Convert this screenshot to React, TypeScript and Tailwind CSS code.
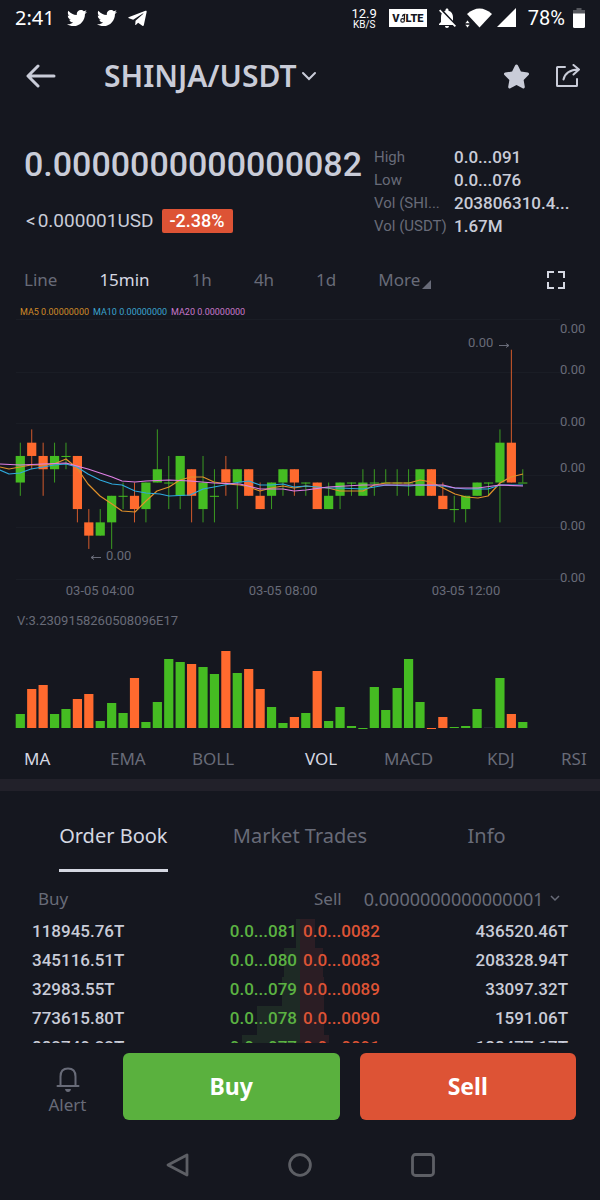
import { useState } from 'react'
import { FaStar, FaTelegramPlane, FaTwitter } from 'react-icons/fa'
import { MdNotificationsOff } from 'react-icons/md'

const GREEN = '#45bc22'
const ORANGE = '#ff6a2e'

type Candle = {
  up: boolean
  // body top, body bottom, wick top, wick bottom, counted in price ticks from the top
  ticks: [number, number, number, number]
  volume: number
  muted?: boolean
}

const candles: Candle[] = [
  { up: true, ticks: [2, 4, 1, 5], volume: 14 },
  { up: false, ticks: [1, 2, 0, 3], volume: 39 },
  { up: false, ticks: [2, 3, 1, 5], volume: 43 },
  { up: true, ticks: [2, 3, 1, 4], volume: 14 },
  { up: true, ticks: [2, 2, 1, 3], volume: 19 },
  { up: false, ticks: [2, 6, 2, 7], volume: 29 },
  { up: false, ticks: [7, 8, 6, 9], volume: 34 },
  { up: true, ticks: [7, 8, 6, 8], volume: 7 },
  { up: true, ticks: [5, 7, 5, 9], volume: 25 },
  { up: true, ticks: [5, 5, 4, 6], volume: 15 },
  { up: false, ticks: [5, 6, 4, 7], volume: 50 },
  { up: true, ticks: [4, 6, 4, 7], volume: 6 },
  { up: true, ticks: [3, 4, 0, 4], volume: 26 },
  { up: true, ticks: [4, 4, 2, 6], volume: 69 },
  { up: true, ticks: [2, 5, 2, 6], volume: 66 },
  { up: false, ticks: [3, 5, 3, 7], volume: 64 },
  { up: true, ticks: [4, 6, 2, 7], volume: 61 },
  { up: true, ticks: [5, 5, 3, 7], volume: 54 },
  { up: false, ticks: [3, 4, 2, 5], volume: 77 },
  { up: true, ticks: [3, 4, 3, 6], volume: 55 },
  { up: false, ticks: [3, 5, 3, 5], volume: 59 },
  { up: false, ticks: [5, 6, 4, 6], volume: 39 },
  { up: true, ticks: [4, 5, 4, 6], volume: 21 },
  { up: true, ticks: [3, 4, 3, 5], volume: 5 },
  { up: false, ticks: [3, 4, 3, 5], volume: 11 },
  { up: true, ticks: [4, 4, 4, 5], volume: 15 },
  { up: false, ticks: [4, 6, 4, 6], volume: 57 },
  { up: true, ticks: [5, 6, 4, 6], volume: 7 },
  { up: true, ticks: [4, 5, 4, 6], volume: 21 },
  { up: true, ticks: [4, 4, 4, 5], volume: 2 },
  { up: true, ticks: [4, 5, 3, 5], volume: 0 },
  { up: true, ticks: [4, 4, 3, 5], volume: 41 },
  { up: true, ticks: [4, 4, 3, 4], volume: 18 },
  { up: true, ticks: [4, 4, 3, 5], volume: 40 },
  { up: true, ticks: [4, 4, 3, 5], volume: 69 },
  { up: true, ticks: [3, 5, 3, 5], volume: 26 },
  { up: false, ticks: [3, 5, 3, 5], volume: 0 },
  { up: false, ticks: [5, 6, 4, 6], volume: 11 },
  { up: true, ticks: [6, 6, 5, 7], volume: 1 },
  { up: true, ticks: [5, 6, 5, 7], volume: 2 },
  { up: true, ticks: [4, 5, 4, 5], volume: 19 },
  { up: true, ticks: [4, 4, 4, 5], volume: 1, muted: true },
  { up: true, ticks: [1, 4, 0, 7], volume: 50 },
  { up: false, ticks: [1, 4, -6, 4], volume: 14 },
  { up: true, ticks: [4, 4, 3, 4], volume: 6 },
]

const averages = [
  {
    label: 'MA5 0.00000000',
    text: 'text-[#d08a28]',
    stroke: '#e0912a',
    points:
      '0,149 9,151 20,149 31,147 43,147 54,146 66,141 77,150 88,166 100,178 112,186 122,193 135,194 146,183 157,173 169,169 180,162 191,159 203,159 214,164 226,166 240,167 249,169 260,173 271,170 283,168 294,170 306,168 317,169 328,170 340,173 363,173 374,167 386,165 409,165 420,162 431,164 443,170 455,176 466,179 478,180 488,178 500,165 511,159 523,156',
  },
  {
    label: 'MA10 0.00000000',
    text: 'text-[#3aa3cf]',
    stroke: '#2fa9dc',
    points:
      '0,152 9,156 20,155 31,151 43,149 54,147 66,146 77,149 88,156 100,162 112,166 122,167 135,173 146,175 160,176 169,178 190,177 203,171 214,169 240,164 249,163 260,167 271,167 283,166 294,169 306,168 328,170 340,170 363,171 386,167 409,168 420,167 443,168 455,170 466,171 488,171 500,167 523,167',
  },
  {
    label: 'MA20 0.00000000',
    text: 'text-[#c877cb]',
    stroke: '#e07fe6',
    points:
      '0,146 20,147 43,146 66,145 77,148 88,151 100,155 112,159 122,163 135,164 146,163 169,162 190,163 214,165 240,166 260,171 283,171 294,173 306,172 328,169 363,167 386,167 443,167 455,170 478,170 500,167 523,168',
  },
]

const stats = [
  ['High', '0.0...091'],
  ['Low', '0.0...076'],
  ['Vol (SHI...', '203806310.4...'],
  ['Vol (USDT)', '1.67M'],
]

const orders = [
  { buyAmount: '118945.76T', buy: '0.0...081', buyDepth: 3, sell: '0.0...0082', sellDepth: 10, sellAmount: '436520.46T' },
  { buyAmount: '345116.51T', buy: '0.0...080', buyDepth: 11, sell: '0.0...0083', sellDepth: 15, sellAmount: '208328.94T' },
  { buyAmount: '32983.55T', buy: '0.0...079', buyDepth: 12, sell: '0.0...0089', sellDepth: 16, sellAmount: '33097.32T' },
  { buyAmount: '773615.80T', buy: '0.0...078', buyDepth: 29, sell: '0.0...0090', sellDepth: 16, sellAmount: '1591.06T' },
  { buyAmount: '882740.22T', buy: '0.0...077', buyDepth: 39, sell: '0.0...0091', sellDepth: 19, sellAmount: '188477.17T' },
]

const candleX = (i: number) => 20.3 + i * 11.42
const tickY = (tick: number) => 111.4 + tick * 13.28

function StatusBar() {
  return (
    <div className="flex h-9 shrink-0 items-center px-[15px] text-white">
      <span className="text-xl leading-6">2:41</span>
      <div className="ml-3 flex items-center gap-2.5">
        <FaTwitter size={20} />
        <FaTwitter size={20} />
        <FaTelegramPlane size={21} />
      </div>
      <div className="ml-auto flex items-center font-['Roboto',sans-serif]">
        <div className="text-center">
          <div className="text-[13px] leading-[13px]">12.9</div>
          <div className="text-[10px] leading-[9px]">KB/S</div>
        </div>
        <div className="ml-3 flex h-[18px] w-[38px] items-center justify-center bg-white text-[11px] font-black leading-none text-[#15171f]">
          V
          <svg width="6" height="11" viewBox="0 0 6 11" fill="none" stroke="currentColor" strokeWidth="1.2">
            <circle cx="2.6" cy="7.4" r="1.8" />
            <path d="M4.4 6.5V2M2.2 3.4Q3.2 1 5.4 1.4" />
          </svg>
          LTE
        </div>
        <MdNotificationsOff className="ml-2" size={24} />
        <svg className="ml-1.5" width="28" height="20" viewBox="0 0 28 20" fill="currentColor">
          <path d="M2 6Q14.500 -5 27 6L14.500 19.500Z" />
          <path d="M0 15.500 2.500 12 5 15.500ZM0 16.500H5L2.500 20Z" stroke="#15171f" strokeWidth=".6" />
        </svg>
        <svg className="ml-1" width="19" height="20" viewBox="0 0 19 20" fill="currentColor">
          <path d="M19 0V19H0Z" />
        </svg>
        <span className="ml-3 text-xl leading-6">78%</span>
        <svg className="ml-2" width="12" height="20" viewBox="0 0 12 20">
          <path d="M3.500 0H8.500V2H12V7H0V2H3.500Z" fill="#55575d" />
          <path d="M0 5.500H12V18.500Q12 20 10.500 20H1.500Q0 20 0 18.500Z" fill="#fff" />
        </svg>
      </div>
    </div>
  )
}

function Header() {
  return (
    <header className="flex h-20 shrink-0 items-center pl-[26px] pr-5 text-[#c9ccd8]">
      <button aria-label="Back">
        <svg width="30" height="24" viewBox="0 0 30 24" fill="none" stroke="currentColor" strokeWidth="3" strokeLinecap="round" strokeLinejoin="round">
          <path d="M28 12H2.500M12 2 2 12 12 22" />
        </svg>
      </button>
      <button className="ml-12 flex items-center gap-1">
        <span className="text-[30px] font-semibold leading-9">SHINJA/USDT</span>
        <svg width="16" height="10" viewBox="0 0 16 10" fill="none" stroke="currentColor" strokeWidth="2" strokeLinecap="round">
          <path d="M2 2 8 8 14 2" />
        </svg>
      </button>
      <button className="ml-auto" aria-label="Favourite">
        <FaStar size={27} />
      </button>
      <button className="ml-6" aria-label="Share">
        <svg width="26" height="24" viewBox="0 0 26 24" fill="none" stroke="currentColor" strokeWidth="2" strokeLinecap="round" strokeLinejoin="round">
          <path d="M11 3H3.500Q3 3 3 3.500V21.500Q3 22 3.500 22H22.500Q23 22 23 21.500V15" />
          <path d="M9.500 15.500Q11.500 6 24.500 5.500M19.500 1 25 5.500 19.500 10.500" />
        </svg>
      </button>
    </header>
  )
}

function Summary() {
  return (
    <section className="flex items-start pb-4 pl-6 pr-5 pt-6 font-['Roboto',sans-serif]">
      <div className="w-[350px]">
        <div className="text-[34px] font-medium leading-[48px] text-[#c9ccd8]">0.0000000000000082</div>
        <div className="mt-[21px] flex h-6 items-center gap-2 pl-0.5">
          <span className="flex gap-0.5 text-[19px] text-[#c9ccd8]">
            <span>&lt;</span>
            <span>0.000001USD</span>
          </span>
          <span className="rounded-xs bg-[#dd5335] px-2 text-lg font-medium leading-6 text-white">-2.38%</span>
        </div>
      </div>
      <dl className="mt-1.5 grid min-w-0 flex-1 grid-cols-[80px_1fr] leading-[23px]">
        {stats.map(([label, value]) => (
          <div key={label} className="contents">
            <dt className="whitespace-nowrap text-[15px] text-[#686b78]">{label}</dt>
            <dd className="whitespace-nowrap text-[17px] font-medium text-[#c9ccd8]">{value}</dd>
          </div>
        ))}
      </dl>
    </section>
  )
}

function Timeframes() {
  const [active, setActive] = useState('15min')
  return (
    <div className="flex h-[52px] items-center gap-[42px] pl-6 pr-[34px] text-[17px] text-[#686b78]">
      {['Line', '15min', '1h', '4h', '1d'].map((item) => (
        <button key={item} onClick={() => setActive(item)} className={item === active ? 'text-[#d5d8e2]' : ''}>{item}</button>
      ))}
      <button className="flex items-end gap-0.5">
        More
        <svg className="mb-1" width="9" height="9" viewBox="0 0 9 9" fill="currentColor">
          <path d="M9 0V9H0Z" />
        </svg>
      </button>
      <button className="ml-auto text-[#d5d8e2]" aria-label="Full screen">
        <svg width="20" height="20" viewBox="0 0 20 20" fill="none" stroke="currentColor" strokeWidth="2">
          <path d="M2 8V2H8M12 2H18V8M18 12V18H12M8 18H2V12" />
        </svg>
      </button>
    </div>
  )
}

function PriceChart() {
  return (
    <svg className="block w-full font-['Roboto',sans-serif]" viewBox="0 0 600 284" role="img" aria-label="Price chart">
      {[1, 54, 105, 157, 209, 261].map((y) => (
        <path key={y} d={`M16 ${y}.5H560`} stroke="#1a1d25" />
      ))}
      {candles.map(({ up, ticks: [top, bottom, high, low] }, i) => (
        <g key={i} fill={up ? GREEN : ORANGE}>
          <rect x={candleX(i) - 0.5} y={tickY(high)} width="1" height={tickY(low) - tickY(high)} opacity="0.8" />
          <rect x={candleX(i) - 4.6} y={tickY(top)} width="9.2" height={Math.max(tickY(bottom) - tickY(top), 1)} />
        </g>
      ))}
      {averages.map((line) => (
        <polyline key={line.label} points={line.points} fill="none" stroke={line.stroke} strokeWidth="1.2" strokeLinejoin="round" />
      ))}
      <g fill="#686b78" fontSize="13">
        {[15, 56, 108, 154, 212, 264].map((y) => (
          <text key={y} x="560" y={y}>0.00</text>
        ))}
        <text x="468" y="29">0.00</text>
        <path d="M499 27.500H509M506 25.500 509 27.500 506 29.500" fill="none" stroke="#686b78" />
        <text x="106" y="242">0.00</text>
        <path d="M101 239.500H91M94 237.500 91 239.500 94 241.500" fill="none" stroke="#686b78" />
        <text x="100" y="277" textAnchor="middle">03-05 04:00</text>
        <text x="283" y="277" textAnchor="middle">03-05 08:00</text>
        <text x="466" y="277" textAnchor="middle">03-05 12:00</text>
      </g>
    </svg>
  )
}

function VolumeChart() {
  return (
    <svg className="block w-full" viewBox="0 0 600 98" role="img" aria-label="Volume chart">
      {candles.map(({ up, volume, muted }, i) => (
        <rect key={i} x={candleX(i) - 4.6} y={88 - volume} width="9.2" height={Math.max(volume, 1)} fill={muted ? '#262832' : up ? GREEN : ORANGE} />
      ))}
    </svg>
  )
}

function Indicators() {
  const [main, setMain] = useState('MA')
  const [sub, setSub] = useState('VOL')
  const color = (on: boolean) => (on ? 'text-left text-[#d5d8e2]' : 'text-left')
  return (
    <div className="grid h-[41px] grid-cols-[86fr_82fr_113fr_79fr_103fr_74fr_39fr] items-center pl-6 text-[17px] text-[#686b78]">
      {['MA', 'EMA', 'BOLL'].map((item) => (
        <button key={item} onClick={() => setMain(item)} className={color(item === main)}>{item}</button>
      ))}
      {['VOL', 'MACD', 'KDJ', 'RSI'].map((item) => (
        <button key={item} onClick={() => setSub(item)} className={color(item === sub)}>{item}</button>
      ))}
    </div>
  )
}

function OrderBook() {
  const [tab, setTab] = useState('Order Book')
  return (
    <section>
      <div className="grid h-[81px] grid-cols-3 justify-items-center px-5 text-xl">
        {['Order Book', 'Market Trades', 'Info'].map((item) => (
          <button
            key={item}
            onClick={() => setTab(item)}
            className={
              item === tab
                ? 'whitespace-nowrap border-b-3 border-[#d5d8e2] pt-3 text-[#d5d8e2]'
                : 'whitespace-nowrap border-b-3 border-transparent pt-3 text-[#686b78]'
            }
          >
            {item}
          </button>
        ))}
      </div>

      <div className="grid h-[47px] grid-cols-2 items-center pt-1.5 text-[17px] text-[#686b78]">
        <span className="pl-[38px]">Buy</span>
        <div className="flex items-center pl-3.5">
          <span>Sell</span>
          <label className="ml-[22px] flex items-center gap-1.5">
            <select aria-label="Price step" className="appearance-none bg-transparent text-lg outline-none">
              <option>0.0000000000000001</option>
              <option>0.000000000000001</option>
            </select>
            <svg width="10" height="7" viewBox="0 0 10 7" fill="none" stroke="currentColor" strokeWidth="1.5">
              <path d="M1 1 5 5 9 1" />
            </svg>
          </label>
        </div>
      </div>

      <table className="w-full table-fixed font-['Roboto',sans-serif] text-[17px] font-medium leading-6">
        <tbody>
          {orders.map((row) => (
            <tr key={row.buy} className="h-[29px] align-top text-[#c9ccd8]">
              <td className="pl-8">{row.buyAmount}</td>
              <td className="relative pr-[3px] text-right text-[#5bb242]">
                <span className="absolute inset-y-0 right-0 bg-[#1e2a25]" style={{ width: `${row.buyDepth}%` }} />
                <span className="relative">{row.buy}</span>
              </td>
              <td className="relative pl-[3px] text-[#dd5335]">
                <span className="absolute inset-y-0 left-0 bg-[#2b1d24]" style={{ width: `${row.sellDepth}%` }} />
                <span className="relative">{row.sell}</span>
              </td>
              <td className="pr-8 text-right">{row.sellAmount}</td>
            </tr>
          ))}
        </tbody>
      </table>
    </section>
  )
}

function TradeBar() {
  return (
    <div className="flex shrink-0 gap-5 pr-6 pt-2.5">
      <button className="flex w-[103px] flex-col items-center pl-8 pt-3.5 text-[17px] leading-6 text-[#686b78]">
        <svg width="24" height="26" viewBox="0 0 24 26" fill="none" stroke="currentColor" strokeWidth="2" strokeLinecap="round">
          <path d="M1.500 19H22.500M4.500 19V9.500Q4.500 1.500 12 1.500T19.500 9.500V19" />
          <path d="M9 22H15Q14.500 25 12 25T9 22Z" fill="currentColor" stroke="none" />
        </svg>
        Alert
      </button>
      <button className="h-[67px] flex-1 rounded-md bg-[#5ab13e] text-[23px] font-bold text-white">Buy</button>
      <button className="h-[67px] flex-1 rounded-md bg-[#dd5335] text-[23px] font-bold text-white">Sell</button>
    </div>
  )
}

function SystemNav() {
  return (
    <nav className="flex h-20 shrink-0 items-center justify-center gap-[99px] pt-2.5 text-[#5d5f65]">
      <button aria-label="System back">
        <svg width="24" height="24" viewBox="0 0 24 24" fill="none" stroke="currentColor" strokeWidth="2.8" strokeLinejoin="round">
          <path d="M22 2V22L3 12Z" />
        </svg>
      </button>
      <button aria-label="Home">
        <svg width="24" height="24" viewBox="0 0 24 24" fill="none" stroke="currentColor" strokeWidth="2.8">
          <circle cx="12" cy="12" r="10.400" />
        </svg>
      </button>
      <button aria-label="Recent apps">
        <svg width="24" height="24" viewBox="0 0 24 24" fill="none" stroke="currentColor" strokeWidth="2.8">
          <rect x="1.500" y="1.500" width="21" height="21" rx="3" />
        </svg>
      </button>
    </nav>
  )
}

export default function App() {
  return (
    <div className="flex h-screen flex-col bg-[#15171f] font-['Noto_Sans',sans-serif]">
      <StatusBar />
      <Header />
      <main className="min-h-0 flex-1 overflow-y-auto [scrollbar-width:none]">
        <Summary />
        <Timeframes />
        <div className="flex h-3 items-center gap-1 pl-5 font-['Roboto',sans-serif] text-[9px] leading-3">
          {averages.map((line) => (
            <span key={line.label} className={line.text}>{line.label}</span>
          ))}
        </div>
        <PriceChart />
        <div className="pl-[17px] font-['Roboto',sans-serif] text-[13px] leading-[38px] text-[#686b78]">V:3.2309158260508096E17</div>
        <VolumeChart />
        <Indicators />
        <div className="h-3 bg-[#22212a]" />
        <OrderBook />
      </main>
      <TradeBar />
      <SystemNav />
    </div>
  )
}
